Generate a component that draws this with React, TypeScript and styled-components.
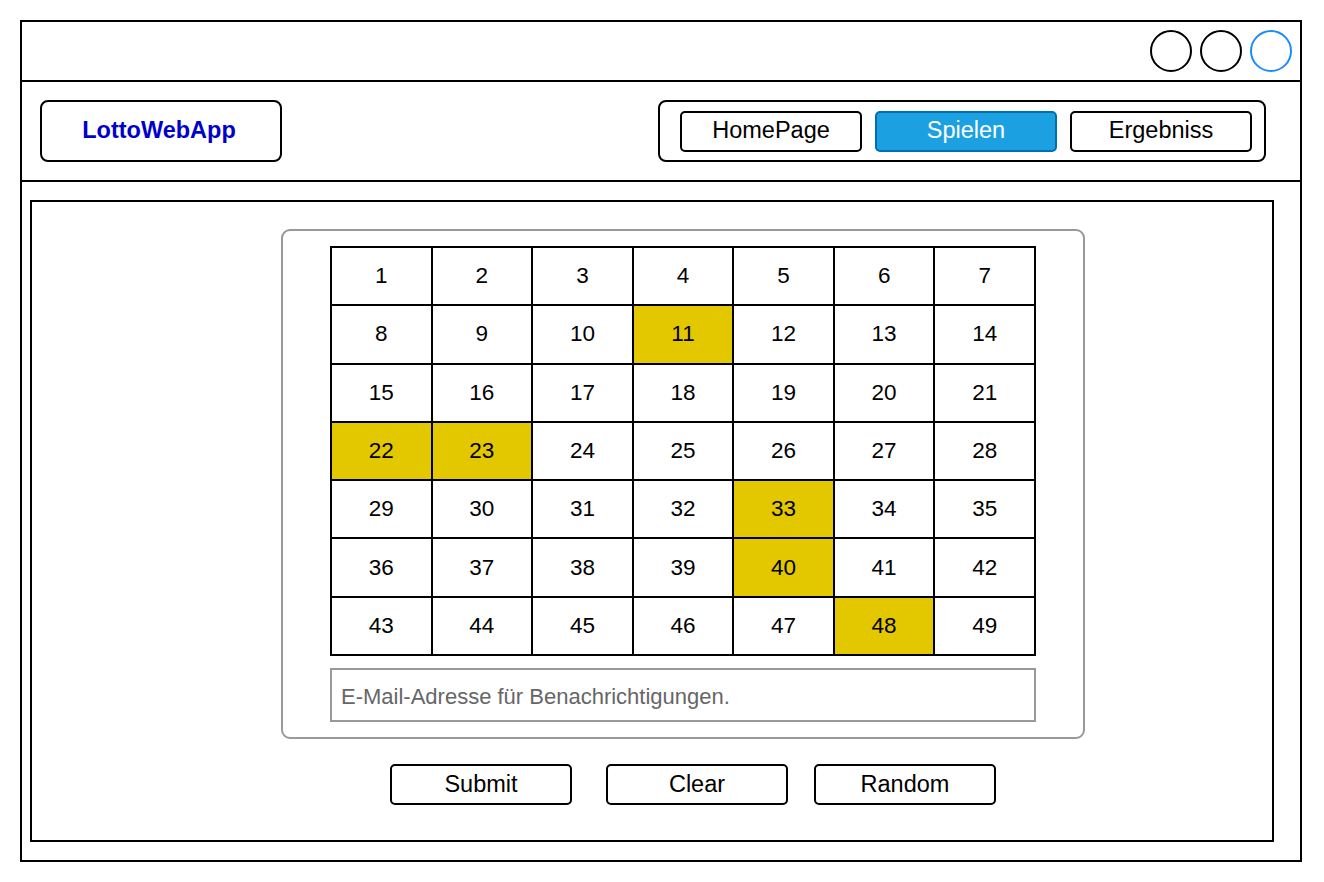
import React from "react";
import styled, { createGlobalStyle } from "styled-components";

const GlobalStyle = createGlobalStyle`
  * { box-sizing: border-box; }
  html, body { margin: 0; padding: 0; background: #ffffff; }
  body { font-family: "Liberation Sans", Arial, sans-serif; color: #000; }
`;

const Frame = styled.div`
  margin: 20px 0 0 20px;
  width: 1282px;
  height: 842px;
  border: 2px solid #000;
  display: flex;
  flex-direction: column;
  background: #fff;
`;

const TitleBar = styled.div`
  height: 60px;
  border-bottom: 2px solid #000;
  display: flex;
  justify-content: flex-end;
  align-items: flex-start;
  gap: 8px;
  padding: 8px 8px 0 0;
`;

const WindowDot = styled.div<{ $blue?: boolean }>`
  width: 42px;
  height: 42px;
  border-radius: 50%;
  border: 2px solid ${(p) => (p.$blue ? "#1a8cff" : "#000")};
`;

const Header = styled.div`
  height: 100px;
  border-bottom: 2px solid #000;
  display: flex;
  align-items: center;
  justify-content: space-between;
  padding: 0 34px 0 18px;
`;

const Logo = styled.div`
  width: 242px;
  height: 62px;
  border: 2px solid #000;
  border-radius: 8px;
  display: flex;
  align-items: center;
  justify-content: center;
  padding: 0 4px 2px 0;
  font-weight: 700;
  font-size: 23.5px;
  color: #0000cc;
`;

const Nav = styled.div`
  width: 608px;
  height: 62px;
  border: 2px solid #000;
  border-radius: 8px;
  display: flex;
  align-items: center;
  gap: 13px;
  padding: 0 12px 0 20px;
`;

const NavButton = styled.div<{ $active?: boolean }>`
  width: 182px;
  height: 41px;
  border: 2px solid ${(p) => (p.$active ? "#006eaf" : "#000")};
  background: ${(p) => (p.$active ? "#1ba1e2" : "#fff")};
  color: ${(p) => (p.$active ? "#fff" : "#000")};
  border-radius: 5px;
  display: flex;
  align-items: center;
  justify-content: center;
  padding-bottom: 2px;
  font-size: 23.5px;
`;

const Content = styled.div`
  flex: 1;
  padding: 18px 26px 18px 8px;
  display: flex;
`;

const Panel = styled.div`
  flex: 1;
  border: 2px solid #000;
  padding: 27px 0 0 249px;
  display: flex;
  flex-direction: column;
  align-items: flex-start;
`;

const Card = styled.div`
  width: 804px;
  border: 2px solid #999;
  border-radius: 9px;
  padding: 15px 47px 15px 47px;
  display: flex;
  flex-direction: column;
  gap: 12px;
`;

const Grid = styled.div`
  width: 706px;
  height: 410px;
  display: grid;
  grid-template-columns: repeat(7, 1fr);
  grid-template-rows: repeat(7, 1fr);
  border-top: 2px solid #000;
  border-left: 2px solid #000;
`;

const Cell = styled.div<{ $picked?: boolean }>`
  border-right: 2px solid #000;
  border-bottom: 2px solid #000;
  background: ${(p) => (p.$picked ? "#e3c800" : "#fff")};
  display: flex;
  align-items: center;
  justify-content: center;
  font-size: 22.5px;
  color: #000;
`;

const EmailInput = styled.input`
  width: 706px;
  height: 54px;
  border: 2px solid #999;
  padding: 3px 9px 0;
  font-family: "Liberation Sans", Arial, sans-serif;
  font-size: 22px;
  color: #000;
  outline: none;
  &::placeholder { color: #666; }
`;

const Actions = styled.div`
  display: flex;
  margin: 25px 0 0 109px;
`;

const ActionButton = styled.div<{ $gap: number }>`
  width: 182px;
  height: 41px;
  border: 2px solid #000;
  border-radius: 5px;
  display: flex;
  align-items: center;
  justify-content: center;
  font-size: 23.5px;
  margin-right: ${(p) => p.$gap}px;
`;

const picked = new Set([11, 22, 23, 33, 40, 48]);

export default function App() {
  const nums = Array.from({ length: 49 }, (_, i) => i + 1);
  return (
    <>
      <GlobalStyle />
      <Frame>
        <TitleBar>
          <WindowDot />
          <WindowDot />
          <WindowDot $blue />
        </TitleBar>
        <Header>
          <Logo>LottoWebApp</Logo>
          <Nav>
            <NavButton>HomePage</NavButton>
            <NavButton $active>Spielen</NavButton>
            <NavButton>Ergebniss</NavButton>
          </Nav>
        </Header>
        <Content>
          <Panel>
            <Card>
              <Grid>
                {nums.map((n) => (
                  <Cell key={n} $picked={picked.has(n)}>
                    {n}
                  </Cell>
                ))}
              </Grid>
              <EmailInput placeholder="E-Mail-Adresse für Benachrichtigungen." />
            </Card>
            <Actions>
              <ActionButton $gap={34}>Submit</ActionButton>
              <ActionButton $gap={26}>Clear</ActionButton>
              <ActionButton $gap={0}>Random</ActionButton>
            </Actions>
          </Panel>
        </Content>
      </Frame>
    </>
  );
}
